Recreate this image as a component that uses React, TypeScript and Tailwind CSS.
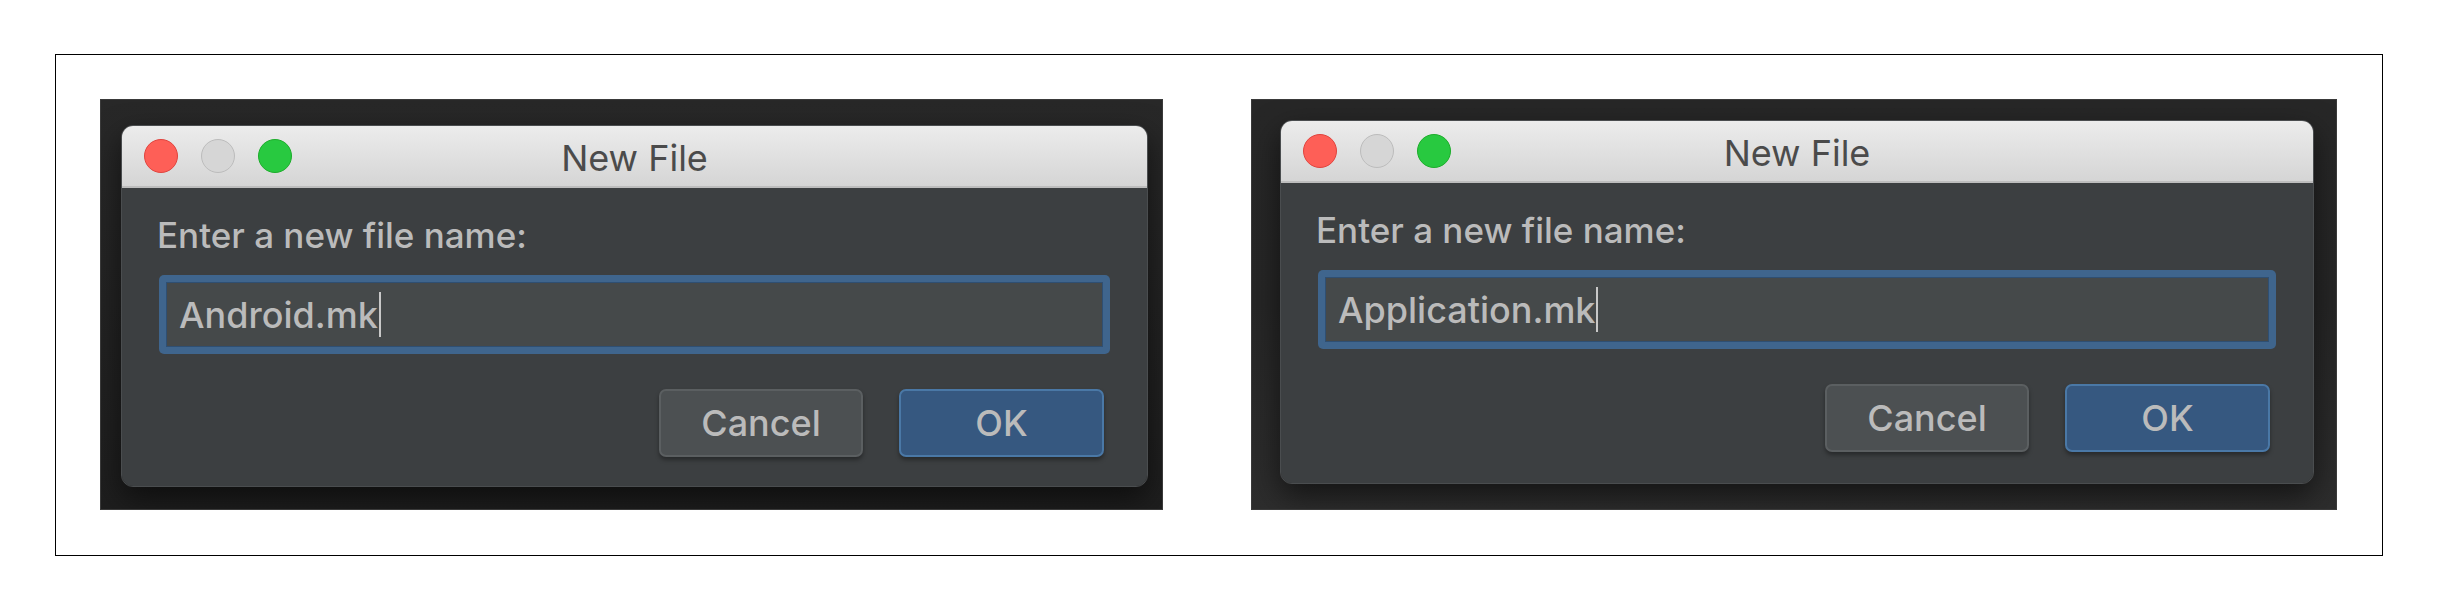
import React from "react";

type DialogProps = {
  fileName: string;
  backdrop: string;
  frameW: string;
  winPos: string;
  winSize: string;
};

function TrafficLights() {
  return (
    <div className="absolute left-[22px] top-0 flex h-full items-center gap-[23px]">
      <span className="h-[34px] w-[34px] rounded-full border border-[#e0443e] bg-[#fe5f57]" />
      <span className="h-[34px] w-[34px] rounded-full border border-[#bcbcbc] bg-[#d6d6d6]" />
      <span className="h-[34px] w-[34px] rounded-full border border-[#1dad2b] bg-[#28c940]" />
    </div>
  );
}

function NewFileDialog({ fileName, backdrop, frameW, winPos, winSize }: DialogProps) {
  return (
    <div className={`${frameW} h-[411px] shrink-0 overflow-hidden border border-[#3a3a3a] ${backdrop}`}>
      <div
        className={`${winPos} ${winSize} flex flex-col overflow-hidden rounded-[12px] border border-[#4a4d4f] shadow-[0_12px_30px_rgba(0,0,0,0.55)]`}
      >
        <div className="relative flex h-[62px] shrink-0 items-center justify-center border-b-2 border-[#bdbdbd] bg-gradient-to-b from-[#ececec] to-[#d5d5d5]">
          <TrafficLights />
          <span className="pt-[3px] text-[36px] leading-none text-[#4b4b4b]">New File</span>
        </div>
        <div className="flex flex-1 flex-col bg-[#3c3f41] px-[37px]">
          <div className="ml-[-2px] mt-[30px] text-[35px] font-medium leading-none text-[#bbbbbb]">
            Enter a new file name:
          </div>
          <div className="mt-[22px] h-[79px] rounded-[5px] bg-[#3f658d] p-[7px]">
            <div className="flex h-full items-center border border-[#2f4f72] bg-[#45494a] pl-[12px]">
              <span className="text-[36px] font-medium leading-none text-[#bbbbbb]">{fileName}</span>
              <span className="ml-[1px] h-[45px] w-[2px] bg-[#c8c8c8]" />
            </div>
          </div>
          <div className="mt-[35px] flex justify-end gap-[36px] pr-[6px]">
            <button className="h-[68px] w-[204px] rounded-[7px] border-2 border-[#5b5f61] bg-[#4c5052] text-[36px] font-medium leading-none text-[#bbbbbb] shadow-[0_3px_4px_rgba(0,0,0,0.35)]">
              Cancel
            </button>
            <button className="h-[68px] w-[205px] rounded-[7px] border-2 border-[#4a78a6] bg-[#365880] text-[36px] font-medium leading-none text-[#bbbbbb] shadow-[0_3px_4px_rgba(0,0,0,0.35)]">
              OK
            </button>
          </div>
        </div>
      </div>
    </div>
  );
}

export default function App() {
  return (
    <div
      className="h-[612px] w-[2438px] bg-white pl-[55px] pt-[54px]"
      style={{ fontFamily: "Inter, 'Noto Sans', sans-serif" }}
    >
      <div className="flex h-[502px] w-[2328px] gap-[88px] border border-black pl-[44px] pt-[44px]">
        <NewFileDialog
          fileName="Android.mk"
          backdrop="bg-gradient-to-b from-[#282828] to-[#1e1e1e]"
          frameW="w-[1063px]"
          winPos="ml-[20px] mt-[25px]"
          winSize="w-[1027px] h-[362px]"
        />
        <NewFileDialog
          fileName="Application.mk"
          backdrop="bg-gradient-to-b from-[#272727] via-[#262626] to-[#2d2d2d]"
          frameW="w-[1086px]"
          winPos="ml-[28px] mt-[20px]"
          winSize="w-[1034px] h-[364px]"
        />
      </div>
    </div>
  );
}
